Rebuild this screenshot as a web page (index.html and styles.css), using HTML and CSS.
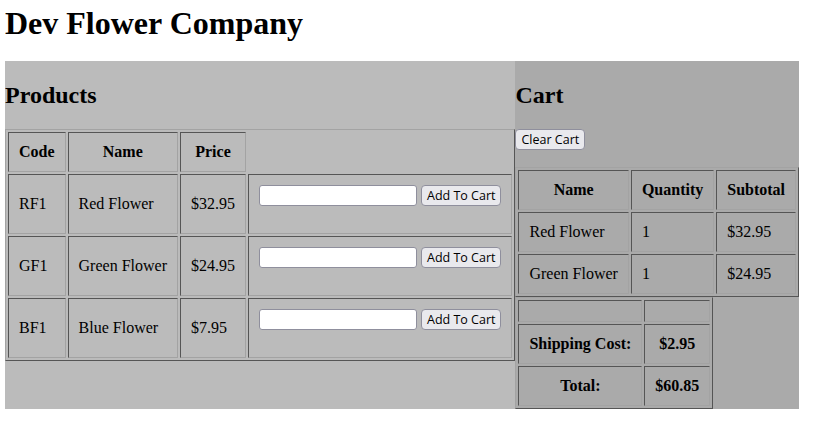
FILE: index.html
```html
<!DOCTYPE html>
<html>
<head>
<meta charset="utf-8">
<title>Dev Flower Company</title>
<link rel="stylesheet" href="styles.css">
</head>
<body>
<h1 class="title">Dev Flower Company</h1>
<div class="shop">
  <div class="products">
    <h2 class="section-title">Products</h2>
    <table class="grid">
      <thead>
        <tr><th>Code</th><th>Name</th><th>Price</th></tr>
      </thead>
      <tbody>
        <tr>
          <td>RF1</td><td>Red Flower</td><td>$32.95</td>
          <td><form class="add-form"><input class="qty" type="text"> <button class="btn" type="button">Add To Cart</button></form></td>
        </tr>
        <tr>
          <td>GF1</td><td>Green Flower</td><td>$24.95</td>
          <td><form class="add-form"><input class="qty" type="text"> <button class="btn" type="button">Add To Cart</button></form></td>
        </tr>
        <tr>
          <td>BF1</td><td>Blue Flower</td><td>$7.95</td>
          <td><form class="add-form"><input class="qty" type="text"> <button class="btn" type="button">Add To Cart</button></form></td>
        </tr>
      </tbody>
    </table>
  </div>
  <div class="cart">
    <h2 class="section-title">Cart</h2>
    <form class="clear-form"><button class="btn" type="button">Clear Cart</button></form>
    <table class="grid">
      <tr><th>Name</th><th>Quantity</th><th>Subtotal</th></tr>
      <tr><td>Red Flower</td><td>1</td><td>$32.95</td></tr>
      <tr><td>Green Flower</td><td>1</td><td>$24.95</td></tr>
    </table>
    <table class="grid">
      <tr><td></td><td></td></tr>
      <tr><th>Shipping Cost:</th><th>$2.95</th></tr>
      <tr><th>Total:</th><th>$60.85</th></tr>
    </table>
  </div>
</div>
</body>
</html>
```
FILE: styles.css
```css
html {
  background: #fff;
}
body {
  margin: 5px;
  font-family: "Liberation Serif", "Times New Roman", serif;
  font-size: 16px;
  color: #000;
}
.title {
  font-size: 32px;
  font-weight: bold;
  margin: 0 0 19px;
}
.shop {
  display: flex;
  align-items: stretch;
}
.products {
  background: #bbbbbb;
}
.cart {
  background: #aaaaaa;
}
.section-title {
  font-size: 24px;
  font-weight: bold;
  margin: 21px 0 20px;
}
.grid {
  border-collapse: separate;
  border-spacing: 2px;
  border: 1px solid;
  border-color: #a3a3a3 #555555 #555555 #a3a3a3;
}
.grid th,
.grid td {
  padding: 10px;
  border: 1px solid;
  border-color: #555555 #a3a3a3 #a3a3a3 #555555;
  vertical-align: middle;
}
.grid th {
  font-weight: bold;
  text-align: center;
}
.grid td {
  text-align: left;
}
.add-form {
  height: 22px;
  margin: 0 0 16px;
  white-space: nowrap;
}
.clear-form {
  height: 22px;
  margin: 0 0 16px;
}
.qty {
  box-sizing: border-box;
  width: 158px;
  height: 21px;
  margin: 0;
  padding: 1px 3px;
  border: 1px solid #8f8f9d;
  border-radius: 3px;
  background: #fff;
  vertical-align: middle;
  font: 13px "Liberation Sans", Arial, sans-serif;
}
.btn {
  box-sizing: border-box;
  height: 21px;
  margin: 0;
  padding: 0 5px;
  border: 1px solid #8f8f9d;
  border-radius: 4px;
  background: #e9e9ed;
  color: #000;
  vertical-align: middle;
  font: 12.5px "Open Sans", "Liberation Sans", sans-serif;
  line-height: 17px;
}
```
